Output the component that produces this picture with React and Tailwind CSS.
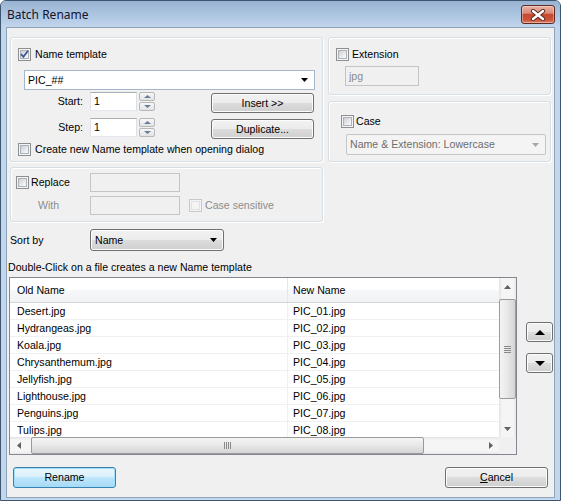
import React from 'react'

const tb = 'bg-white border border-t-[#abadb3] border-l-[#e2e3ea] border-r-[#dbdfe6] border-b-[#e3e9ef]'
const tbOff = 'bg-[#f0f0f0] border border-[#c3c6c9]'
const btn = 'border border-[#707070] rounded-[3px] bg-[linear-gradient(#f2f2f2_0%,#ebebeb_50%,#dddddd_50%,#cfcfcf_100%)] shadow-[inset_0_0_0_1px_#fcfcfc] flex items-center justify-center text-black'
const group = 'border border-[#d5dfe5] rounded-[3px] shadow-[inset_1px_1px_0_#ffffff,1px_1px_0_#ffffff]'

const files = ['Desert', 'Hydrangeas', 'Koala', 'Chrysanthemum', 'Jellyfish', 'Lighthouse', 'Penguins', 'Tulips']

function Tri({ dir = 'down', w = 7, h = 4, color = '#000' }) {
  const side = dir === 'left' || dir === 'right'
  const W = side ? h : w
  const H = side ? w : h
  let pts = `0,0 ${w},0 ${w / 2},${h}`
  if (dir === 'up') pts = `0,${h} ${w},${h} ${w / 2},0`
  if (dir === 'left') pts = `${h},0 ${h},${w} 0,${w / 2}`
  if (dir === 'right') pts = `0,0 0,${w} ${h},${w / 2}`
  return (
    <svg width={W} height={H} viewBox={`0 0 ${W} ${H}`} className="block">
      <polygon points={pts} fill={color} />
    </svg>
  )
}

function Check({ checked, disabled }) {
  return (
    <span className={`relative w-[13px] h-[13px] shrink-0 flex p-[1px] border ${disabled ? 'border-[#c8c8c8] bg-[#f4f4f4]' : 'border-[#8e8f8f] bg-[#f4f4f4]'}`}>
      <span className={`flex-1 border ${disabled ? 'border-[#e2e2e2] bg-[#f4f4f4]' : 'border-[#aeb3b9] bg-[linear-gradient(135deg,#cbcfd4,#eef0f2_70%,#f8f8f8)]'}`} />
      {checked && (
        <svg width="13" height="13" viewBox="0 0 13 13" className="absolute left-[-1px] top-[-1px]">
          <path d="M3 6.2 L5.4 8.8 L10 2.8" stroke="#3f5a96" strokeWidth="1.8" fill="none" />
        </svg>
      )}
    </span>
  )
}

function Spin({ value }) {
  return (
    <div className="flex ml-[6px]">
      <div className={`${tb} w-[47px] h-[19px] pl-[3px] leading-[17px]`}>{value}</div>
      <div className="ml-[2px] w-[16px] h-[19px] flex flex-col gap-[1px]">
        <div className="flex-1 border border-[#b8b8b8] rounded-[2px] bg-[linear-gradient(#f7f7f7,#e3e3e3)] flex items-center justify-center">
          <Tri dir="up" w={7} h={3} color="#6a7c9c" />
        </div>
        <div className="flex-1 border border-[#b8b8b8] rounded-[2px] bg-[linear-gradient(#f7f7f7,#e3e3e3)] flex items-center justify-center">
          <Tri dir="down" w={7} h={3} color="#6a7c9c" />
        </div>
      </div>
    </div>
  )
}

function CloseBtn() {
  return (
    <div className="mt-[4px] w-[34px] h-[19px] rounded-[3px] border border-[#5e2a24] bg-[linear-gradient(#eab3a5_0%,#d98b78_42%,#c44a32_50%,#cd5439_82%,#de8468_100%)] shadow-[inset_0_0_0_1px_rgba(255,255,255,0.35)] flex items-center justify-center">
      <svg width="16" height="12" viewBox="0 0 16 12">
        <path d="M3 2 L13 10 M13 2 L3 10" stroke="#5a2a24" strokeWidth="4.2" strokeLinecap="round" />
        <path d="M3 2 L13 10 M13 2 L3 10" stroke="#ffffff" strokeWidth="2.4" strokeLinecap="round" />
      </svg>
    </div>
  )
}

function VScroll() {
  return (
    <div className="w-[17px] flex flex-col bg-[linear-gradient(90deg,#e3e3e3,#f5f5f5_18%,#f5f5f5_82%,#e8e8e8)]">
      <div className="h-[17px] shrink-0 flex items-center justify-center">
        <Tri dir="up" w={7} h={4} color="#606060" />
      </div>
      <div className="flex-1">
        <div className="mt-[4px] h-[100px] border border-[#9b9b9b] rounded-[2px] bg-[linear-gradient(90deg,#f4f4f4,#e9e9e9_45%,#d5d5d5)] flex flex-col items-center justify-center gap-[1px]">
          <div className="w-[7px] h-[1px] bg-[#8a8a8a]" />
          <div className="w-[7px] h-[1px] bg-[#8a8a8a]" />
          <div className="w-[7px] h-[1px] bg-[#8a8a8a]" />
          <div className="w-[7px] h-[1px] bg-[#8a8a8a]" />
        </div>
      </div>
      <div className="h-[17px] shrink-0 flex items-center justify-center">
        <Tri dir="down" w={7} h={4} color="#606060" />
      </div>
    </div>
  )
}

function HScroll() {
  return (
    <div className="w-[489px] flex bg-[linear-gradient(#e3e3e3,#f5f5f5_18%,#f5f5f5_82%,#e8e8e8)]">
      <div className="w-[17px] shrink-0 flex items-center justify-center">
        <Tri dir="left" w={7} h={4} color="#606060" />
      </div>
      <div className="flex-1 flex items-stretch">
        <div className="ml-[4px] w-[393px] border border-[#9b9b9b] rounded-[2px] bg-[linear-gradient(#f4f4f4,#e9e9e9_45%,#d5d5d5)] flex items-center justify-center gap-[1px]">
          <div className="w-[1px] h-[7px] bg-[#8a8a8a]" />
          <div className="w-[1px] h-[7px] bg-[#8a8a8a]" />
          <div className="w-[1px] h-[7px] bg-[#8a8a8a]" />
          <div className="w-[1px] h-[7px] bg-[#8a8a8a]" />
        </div>
      </div>
      <div className="w-[17px] shrink-0 flex items-center justify-center">
        <Tri dir="right" w={7} h={4} color="#606060" />
      </div>
    </div>
  )
}

export default function App() {
  return (
    <div className="w-[561px] h-[501px] bg-white font-['Liberation_Sans',Arial,sans-serif] text-[10.6px] leading-[13px] text-black">
      <div className="w-full h-full flex flex-col border border-[#3e5570] rounded-t-[6px] bg-[#c2d6ec] overflow-hidden">

        {/* Title bar */}
        <div className="h-[26px] shrink-0 flex items-start justify-between pl-[6px] pr-[5px] bg-[linear-gradient(#98b3d2,#b4cbe5_70%,#c2d6ec)]">
          <span className="mt-[6px] font-['Noto_Sans',sans-serif] text-[12px] leading-[16px] text-[#14142e]">Batch Rename</span>
          <CloseBtn />
        </div>

        {/* Client */}
        <div className="flex-1 mx-[5px] mb-[2px] border border-[#8fa4bb] bg-[#f0f0f0] flex flex-col">

          <div className="flex ml-[3px] mt-[9px] gap-[5px]">
            {/* Name template */}
            <div className={`${group} w-[313px] h-[125px] pt-[10px] pl-[7px]`}>
              <div className="flex items-center h-[13px]">
                <Check checked />
                <span className="ml-[4px]">Name template</span>
              </div>
              <div className="ml-[6px] mt-[9px] w-[291px] h-[20px] bg-white border border-[#a3b6cd] flex items-center justify-between pl-[3px] pr-[6px]">
                <span>PIC_##</span>
                <Tri dir="down" w={7} h={4} />
              </div>
              <div className="flex mt-[2px] h-[21px]">
                <span className="w-[66px] text-right pr-[1px] leading-[19px]">Start:</span>
                <Spin value="1" />
                <button className={`${btn} ml-[56px] mt-[1px] w-[103px] h-[20px]`}>Insert &gt;&gt;</button>
              </div>
              <div className="flex mt-[5px] h-[21px]">
                <span className="w-[66px] text-right pr-[1px] leading-[19px]">Step:</span>
                <Spin value="1" />
                <button className={`${btn} ml-[56px] mt-[1px] w-[103px] h-[20px]`}>Duplicate...</button>
              </div>
              <div className="flex items-center h-[13px] mt-[4px]">
                <Check />
                <span className="ml-[4px]">Create new Name template when opening dialog</span>
              </div>
            </div>

            <div className="w-[223px] flex flex-col gap-[6px]">
              {/* Extension */}
              <div className={`${group} h-[58px] pt-[10px] pl-[7px]`}>
                <div className="flex items-center h-[13px]">
                  <Check />
                  <span className="ml-[3px]">Extension</span>
                </div>
                <div className={`${tbOff} ml-[9px] mt-[5px] w-[74px] h-[20px] pl-[3px] leading-[18px] text-[#8b8b8b]`}>jpg</div>
              </div>
              {/* Case */}
              <div className={`${group} h-[61px] pt-[13px] pl-[12px]`}>
                <div className="flex items-center h-[13px]">
                  <Check />
                  <span className="ml-[2px]">Case</span>
                </div>
                <div className="ml-[5px] mt-[6px] w-[200px] h-[21px] bg-[#f4f4f4] border border-[#c3c6c9] rounded-[2px] flex items-center justify-between pl-[3px] pr-[6px] text-[#6d6d6d]">
                  <span>Name &amp; Extension: Lowercase</span>
                  <Tri dir="down" w={7} h={4} color="#a8a8a8" />
                </div>
              </div>
            </div>
          </div>

          {/* Replace */}
          <div className={`${group} ml-[3px] mt-[5px] w-[313px] h-[55px] pt-[5px] pl-[5px]`}>
            <div className="flex items-center h-[19px]">
              <div className="w-[74px] flex items-center">
                <Check />
                <span className="ml-[2px]">Replace</span>
              </div>
              <div className={`${tbOff} w-[90px] h-[19px]`} />
            </div>
            <div className="flex items-center h-[19px] mt-[4px]">
              <span className="w-[74px] pl-[22px] text-[#8d8d8d]">With</span>
              <div className={`${tbOff} w-[90px] h-[19px]`} />
              <span className="ml-[9px]"><Check disabled /></span>
              <span className="ml-[3px] text-[#8d8d8d]">Case sensitive</span>
            </div>
          </div>

          {/* Sort by */}
          <div className="ml-[3px] mt-[7px] flex items-center h-[22px]">
            <span className="w-[80px]">Sort by</span>
            <div className={`${btn} w-[134px] h-[22px] !justify-between pl-[4px] pr-[6px]`}>
              <span>Name</span>
              <Tri dir="down" w={7} h={4} />
            </div>
          </div>

          <div className="ml-[1px] mt-[10px] h-[13px]">Double-Click on a file creates a new Name template</div>

          {/* List */}
          <div className="mt-[3px] flex">
            <div className="ml-[2px] w-[508px] h-[178px] border border-[#828790] bg-white flex flex-col">
              <div className="flex h-[159px]">
                <div className="w-[489px] flex flex-col overflow-hidden">
                  <div className="h-[25px] shrink-0 flex border-b border-[#d5d5d5] bg-[linear-gradient(#ffffff_0%,#ffffff_50%,#f7f8fa_50%,#f1f2f4_100%)]">
                    <div className="w-[278px] border-r border-[#e3e8ee] pl-[7px] flex items-center">Old Name</div>
                    <div className="flex-1 pl-[5px] flex items-center">New Name</div>
                  </div>
                  {files.map((f, i) => (
                    <div key={f} className="h-[17px] shrink-0 flex border-b border-[#f0f0f0]">
                      <div className="w-[278px] border-r border-[#f0f0f0] pl-[7px] leading-[16px]">{f}.jpg</div>
                      <div className="pl-[5px] leading-[16px]">PIC_0{i + 1}.jpg</div>
                    </div>
                  ))}
                </div>
                <VScroll />
              </div>
              <div className="flex h-[17px]">
                <HScroll />
                <div className="w-[17px] bg-[#f0f0f0]" />
              </div>
            </div>

            <div className="ml-[9px] mt-[45px] flex flex-col gap-[11px]">
              <button className={`${btn} w-[27px] h-[20px]`}><Tri dir="up" w={10} h={5} /></button>
              <button className={`${btn} w-[27px] h-[20px]`}><Tri dir="down" w={10} h={5} /></button>
            </div>
          </div>

          {/* Bottom buttons */}
          <div className="mt-[12px] flex justify-between px-[6px]">
            <button className="w-[103px] h-[21px] rounded-[3px] border border-[#3c7fb1] bg-[linear-gradient(#eaf6fd_0%,#d9f0fc_50%,#bee6fd_50%,#a7d9f5_100%)] shadow-[inset_0_0_0_1px_#9ee0fb] flex items-center justify-center">Rename</button>
            <button className={`${btn} w-[103px] h-[21px]`}><span className="underline">C</span>ancel</button>
          </div>
        </div>
      </div>
    </div>
  )
}
